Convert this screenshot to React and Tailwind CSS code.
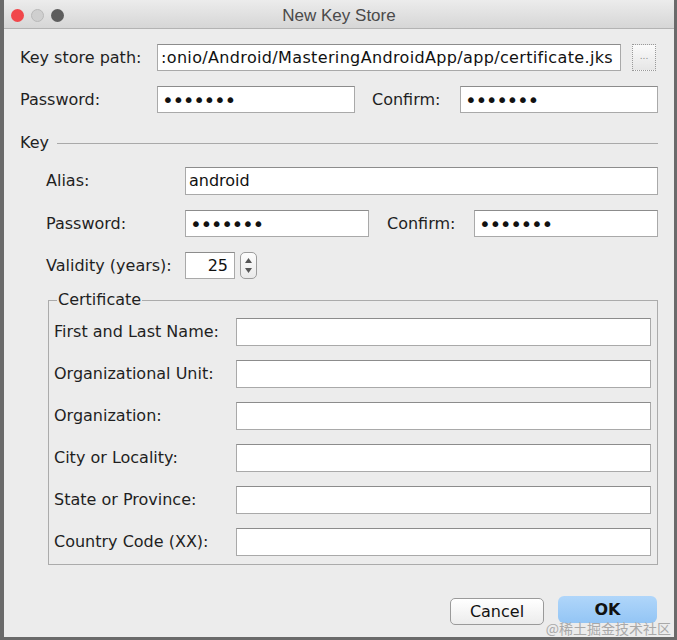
import React from "react";

const font = { fontFamily: '"DejaVu Sans", "Liberation Sans", sans-serif' };

const Field = ({ className = "", children, right }) => (
  <div
    className={`h-[27px] bg-white border border-[#a9a9a9] border-t-[#8c8c8c] flex items-center overflow-hidden whitespace-nowrap px-[3px] text-[16px] text-[#111] ${right ? "justify-end" : ""} ${className}`}
  >
    {children}
  </div>
);

const Dots = () => (
  <span className="text-[20px] leading-none tracking-[-1.4px] text-[#111] pl-[1px]">•••••••</span>
);

const Label = ({ className = "", children }) => (
  <div className={`text-[16px] text-[#1f1f1f] shrink-0 ${className}`}>{children}</div>
);

const CertRow = ({ label }) => (
  <div className="flex items-center h-[28px]">
    <Label className="w-[182px]">{label}</Label>
    <Field className="flex-1 h-[28px]" />
  </div>
);

export default function App() {
  return (
    <div
      className="relative w-[677px] h-[640px] bg-[#ececec] border-l-[4px] border-r-[3px] border-b-[3px] border-[#6a6a6a] flex flex-col"
      style={font}
    >
      {/* title bar */}
      <div className="relative h-[29px] shrink-0 bg-gradient-to-b from-[#ececec] to-[#d6d6d6] border-b border-[#b3b3b3] flex items-center pl-[7px] pt-[2px] gap-[7px]">
        <span className="w-[13px] h-[13px] rounded-full bg-[#f1474b]" />
        <span className="w-[13px] h-[13px] rounded-full bg-[#cfcfcf] border border-[#b9b9b9]" />
        <span className="w-[13px] h-[13px] rounded-full bg-[#5d5d5d]" />
        <div
          className="absolute inset-0 pt-[3px] flex items-center justify-center text-[17px] text-[#4a4a4a] pointer-events-none"
          style={{ fontFamily: '"Liberation Sans", Arial, sans-serif' }}
        >
          New Key Store
        </div>
      </div>

      <div className="flex flex-col pl-[16px] pr-[16px] pt-[15px]">
        {/* key store path */}
        <div className="flex items-center h-[27px]">
          <Label className="w-[137px]">Key store path:</Label>
          <Field className="w-[464px]">
            <span className="tracking-[0.35px]">:onio/Android/MasteringAndroidApp/app/certificate.jks</span>
          </Field>
          <div className="ml-[11px] w-[24px] h-[27px] border border-dotted border-[#999] bg-gradient-to-b from-[#fafafa] to-[#e6e6e6] flex items-center justify-center text-[9px] text-[#888] leading-none pb-[3px]">
            ...
          </div>
        </div>

        {/* password */}
        <div className="flex items-center h-[27px] mt-[15px]">
          <Label className="w-[137px]">Password:</Label>
          <Field className="w-[198px]"><Dots /></Field>
          <Label className="ml-[17px] w-[88px]">Confirm:</Label>
          <Field className="flex-1"><Dots /></Field>
        </div>

        {/* key separator */}
        <div className="flex items-center h-[20px] mt-[20px]">
          <Label>Key</Label>
          <div className="flex-1 ml-[8px] h-px bg-[#a9a9a9]" />
        </div>

        <div className="ml-[26px] flex flex-col">
          {/* alias */}
          <div className="flex items-center h-[28px] mt-[14px]">
            <Label className="w-[139px]">Alias:</Label>
            <Field className="flex-1 h-[28px]">android</Field>
          </div>

          {/* key password */}
          <div className="flex items-center h-[27px] mt-[15px]">
            <Label className="w-[139px]">Password:</Label>
            <Field className="w-[184px]"><Dots /></Field>
            <Label className="ml-[18px] w-[87px]">Confirm:</Label>
            <Field className="flex-1"><Dots /></Field>
          </div>

          {/* validity */}
          <div className="flex items-center h-[27px] mt-[15px]">
            <Label className="w-[139px]">Validity (years):</Label>
            <Field className="w-[50px] pr-[6px]" right>25</Field>
            <div className="ml-[5px] w-[17px] h-[27px] rounded-[5px] border border-[#9c9c9c] bg-gradient-to-b from-[#fdfdfd] to-[#e9e9e9] flex flex-col items-center justify-center gap-[5px]">
              <svg width="7" height="5" viewBox="0 0 7 5"><path d="M3.5 0L7 5H0z" fill="#555" /></svg>
              <svg width="7" height="5" viewBox="0 0 7 5"><path d="M0 0h7L3.5 5z" fill="#555" /></svg>
            </div>
          </div>
        </div>

        {/* certificate */}
        <fieldset className="ml-[28px] mt-[12px] border border-[#ababab] pl-[5px] pr-[6px] pb-[8px] pt-[9px] flex flex-col gap-[14px]">
          <legend className="ml-[3px] px-[1px] text-[16px] text-[#1f1f1f] leading-[18px]">Certificate</legend>
          <CertRow label="First and Last Name:" />
          <CertRow label="Organizational Unit:" />
          <CertRow label="Organization:" />
          <CertRow label="City or Locality:" />
          <CertRow label="State or Province:" />
          <CertRow label="Country Code (XX):" />
        </fieldset>

        {/* buttons */}
        <div className="flex justify-end items-start mt-[31px] pr-[1px] gap-[14px]">
          <button className="mt-[2px] w-[94px] h-[27px] rounded-[5px] border border-[#9a9a9a] bg-gradient-to-b from-[#ffffff] to-[#ececec] text-[16px] text-[#111] flex items-center justify-center">
            Cancel
          </button>
          <button className="w-[99px] h-[27px] rounded-[6px] bg-gradient-to-b from-[#b0d6fa] to-[#93c5f5] text-[16px] font-bold text-[#111] flex items-center justify-center">
            OK
          </button>
        </div>
      </div>

      {/* watermark */}
      <div
        className="absolute right-[3px] bottom-[2px] text-[14px] text-[#a9a9a9] leading-none"
        style={{ fontFamily: '"Noto Sans CJK SC", sans-serif' }}
      >
        @稀土掘金技术社区
      </div>
    </div>
  );
}
